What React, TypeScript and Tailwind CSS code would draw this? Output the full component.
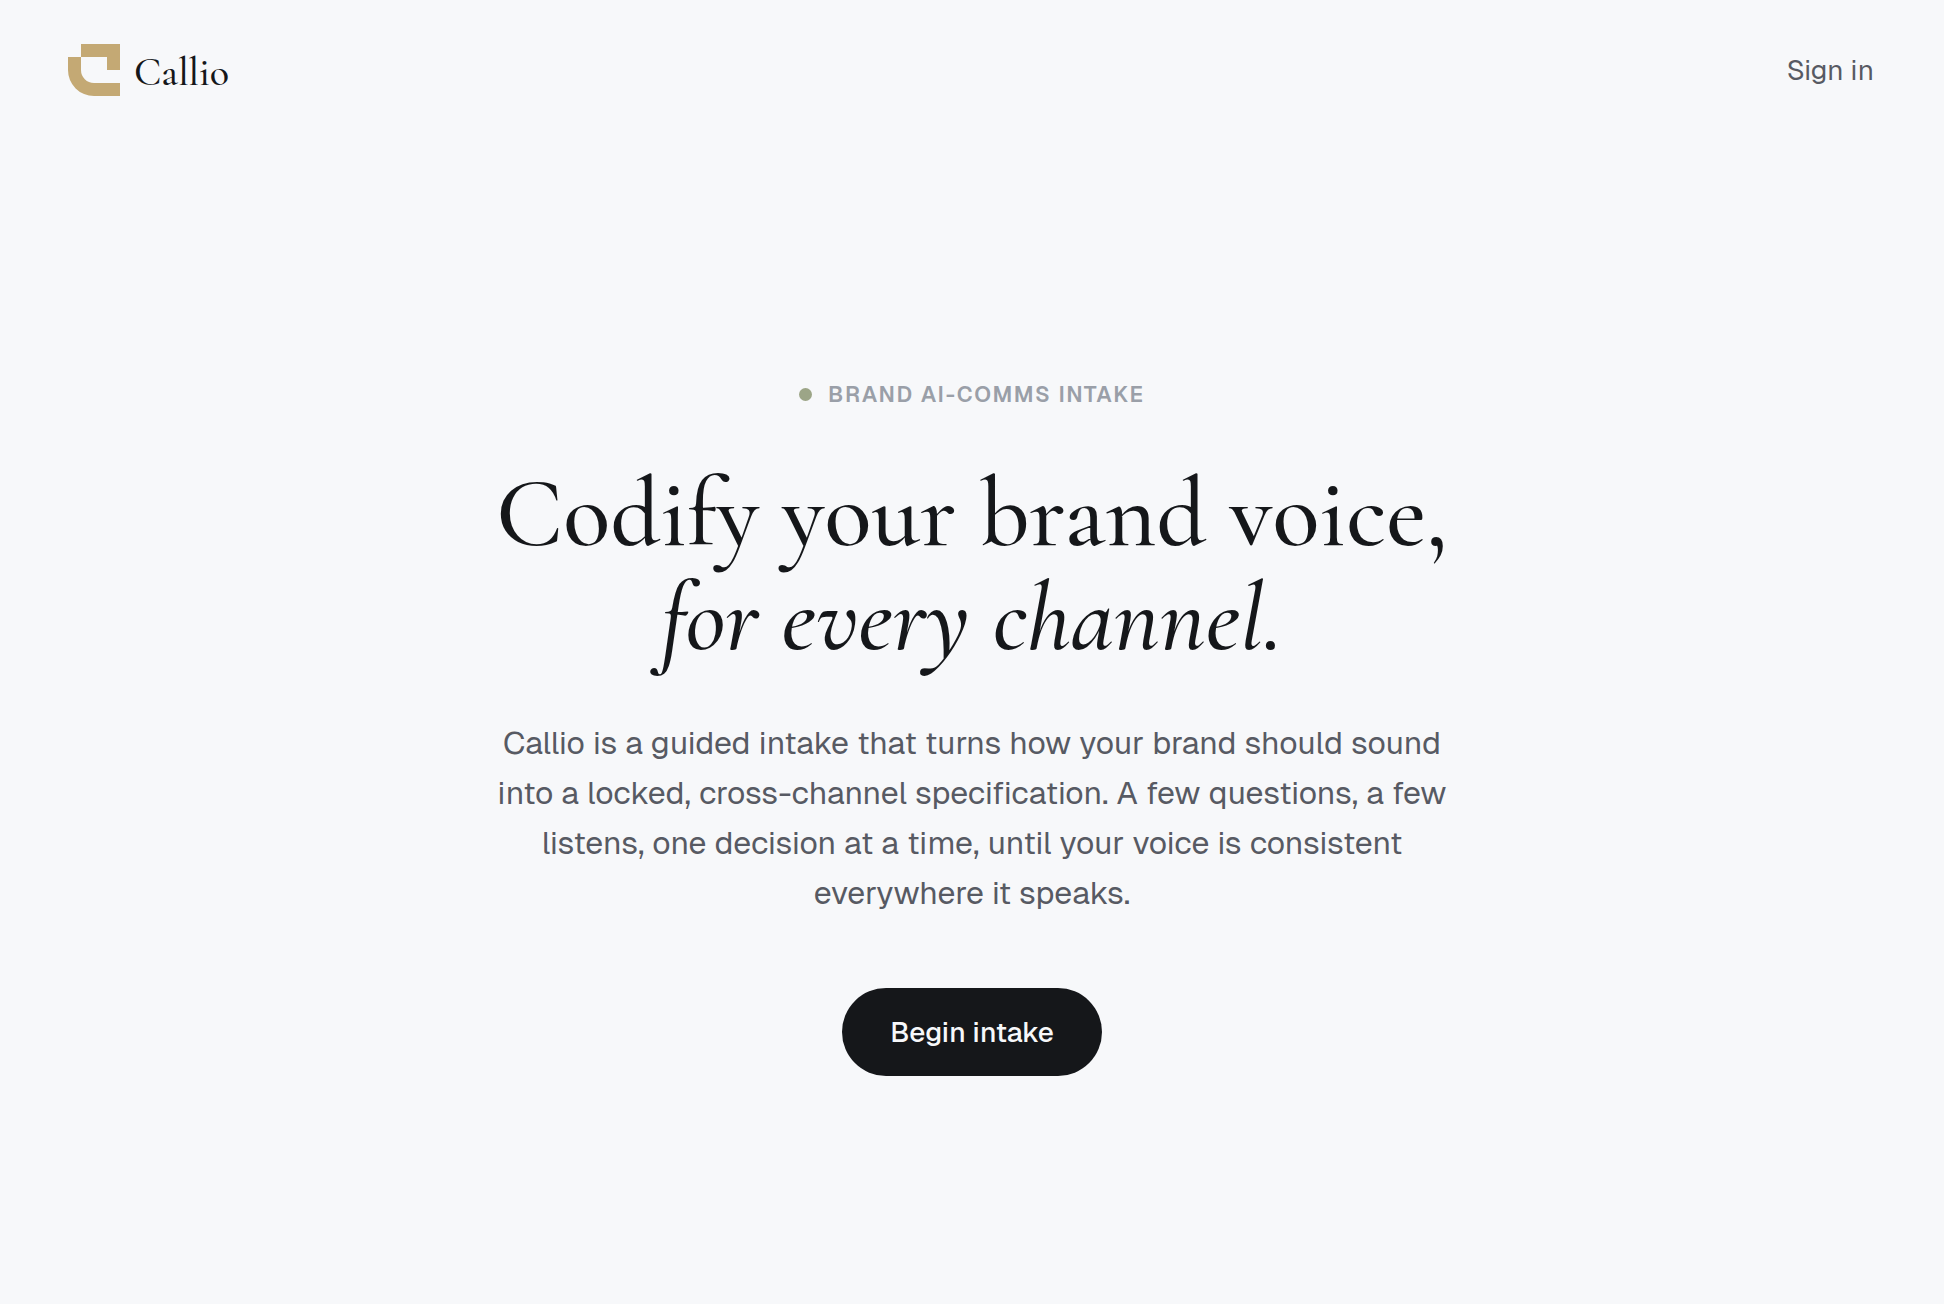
function Logo() {
  return (
    <svg viewBox="0 0 52 52" className="size-[52px] shrink-0" fill="#c4a974" aria-hidden="true">
      <path d="M13 0H52V26H39V13H13Z" />
      <path d="M0 13H13V26A13 13 0 0 0 26 39H52V52H26A26 26 0 0 1 0 26Z" />
    </svg>
  );
}

export default function App() {
  return (
    <div className="flex min-h-screen flex-col bg-[#f7f8fa] font-['Geist','Inter','Liberation_Sans',sans-serif] text-[#15171a]">
      <header className="flex items-center justify-between py-11 pr-[70px] pl-17">
        <a href="#" className="flex items-center gap-3.5">
          <Logo />
          <span className="pt-1 font-['Cormorant_Garamond','Liberation_Serif',serif] text-[40px] leading-[48px] font-medium">
            Callio
          </span>
        </a>
        <a href="#" className="text-[28px] leading-9 text-[#575a63]">
          Sign in
        </a>
      </header>
      <main className="flex flex-1 flex-col items-center justify-center px-8 pt-2.5 text-center">
        <p className="flex items-center gap-4 text-[22px] leading-8 font-semibold tracking-[0.08em] text-[#9a9fa8]">
          <span className="size-[13px] rounded-full bg-[#9ca587]" />
          BRAND AI-COMMS INTAKE
        </p>
        <h1 className="mt-13 font-['Cormorant_Garamond','Liberation_Serif',serif] text-[98px] leading-[104px] font-medium">
          Codify your brand voice,
          <br />
          <em>for every channel.</em>
        </h1>
        <p className="mt-12 max-w-[960px] text-[32px] leading-[50px] text-[#575a63]">
          Callio is a guided intake that turns how your brand should sound into a locked, cross-channel specification. A
          few questions, a few listens, one decision at a time, until your voice is consistent everywhere it speaks.
        </p>
        <button type="button" className="mt-[70px] h-[88px] rounded-full bg-[#15171a] px-12 text-[28px] font-medium text-[#f7f8fa]">
          Begin intake
        </button>
      </main>
    </div>
  );
}
